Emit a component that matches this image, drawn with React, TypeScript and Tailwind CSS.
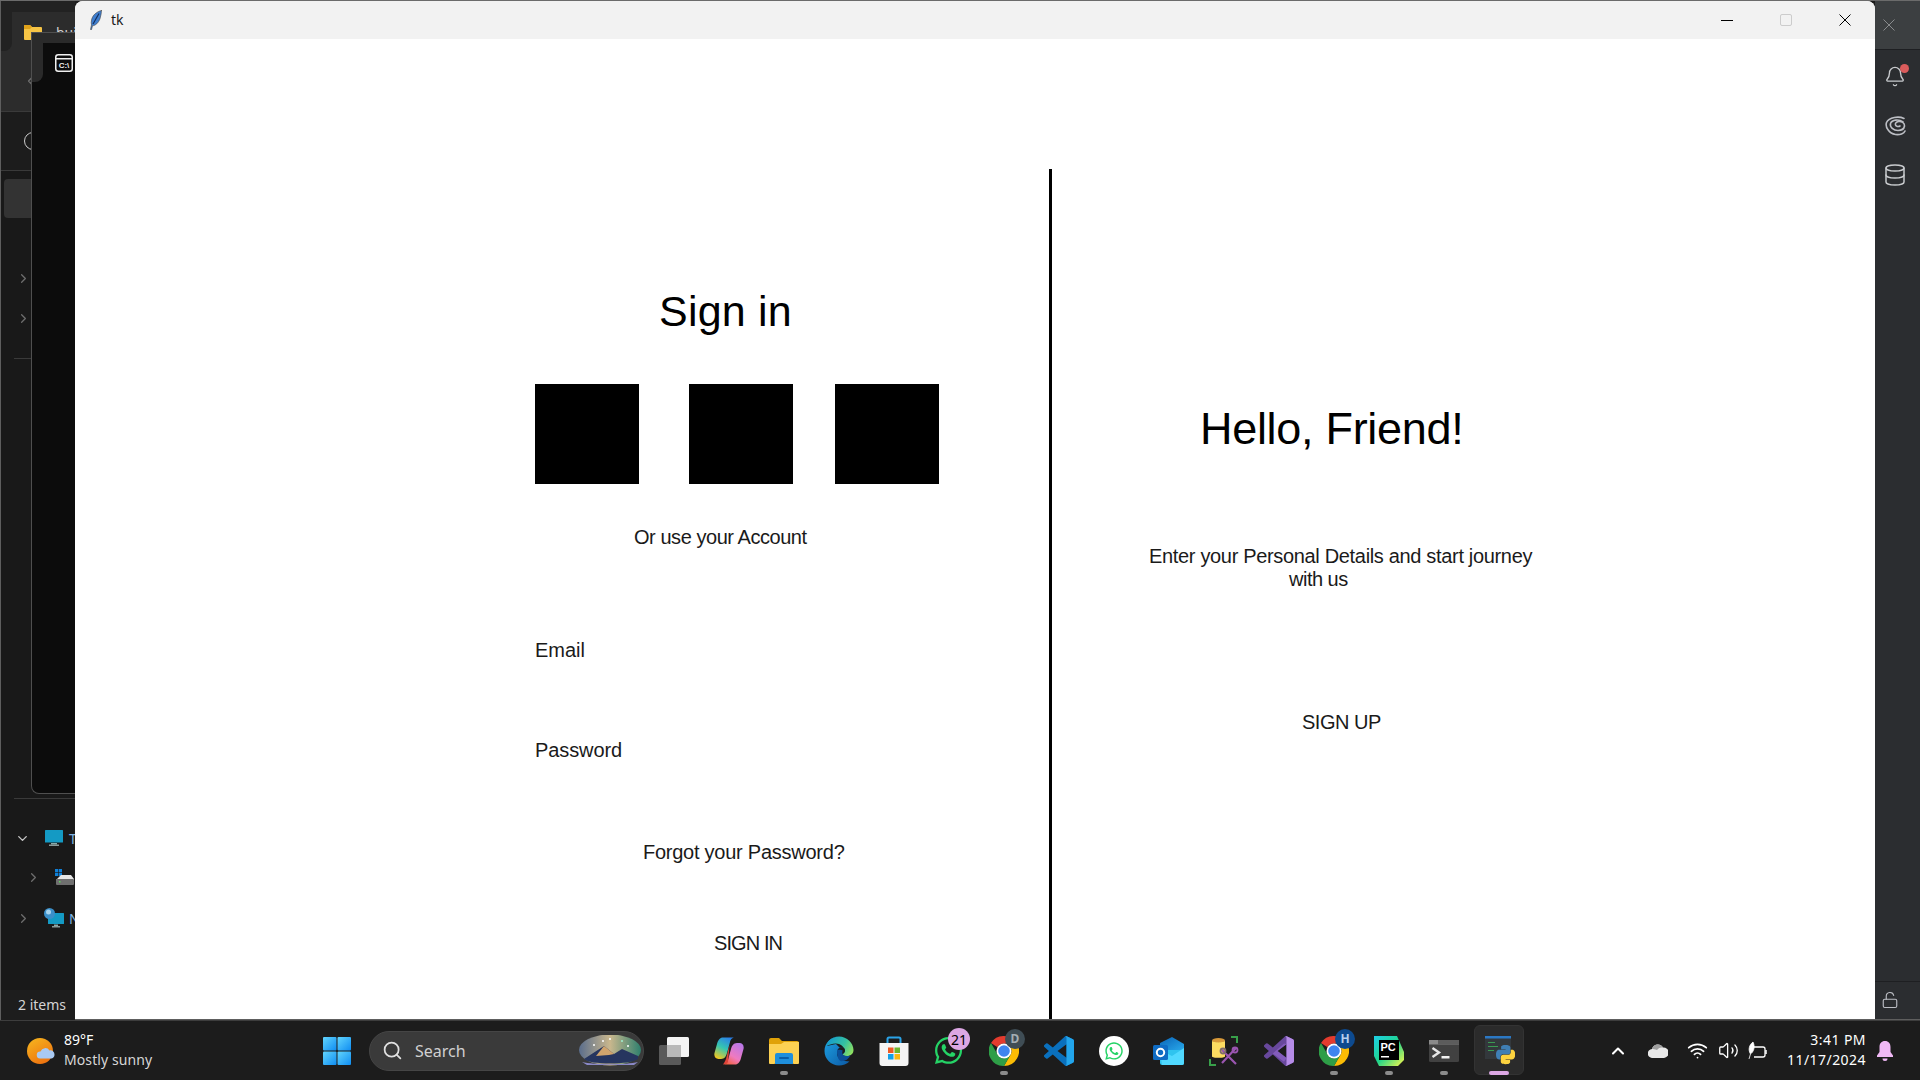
import React from "react";
import { Bell, ChevronDown, ChevronLeft, ChevronRight, ChevronUp, Database, LockOpen, Search, Volume2, Wifi } from "lucide-react";
import { FaWhatsapp } from "react-icons/fa";

const seg = "font-['Noto_Sans',sans-serif]";
const BG = "#1c1c1c";

function Feather() {
  return (
    <svg width="14" height="20" viewBox="0 0 14 20">
      <path d="M12.5 0.5C8 1.5 3.5 5 2.5 10c-.4 2-.3 3.5 0 5L1.5 19.5l1 .2 1-4c3 0 6-3 7.5-7 .9-3 1.5-6 1.5-8.700z" fill="#3f7fd0" stroke="#444" strokeWidth="0.6" />
      <path d="M10 3.500 4 14" stroke="#16305c" strokeWidth="1.200" />
    </svg>
  );
}

function Sun() {
  return (
    <svg width="28" height="26" viewBox="0 0 28 26">
      <defs>
        <linearGradient id="sunG" x1="0" y1="0" x2="0.6" y2="1">
          <stop offset="0" stopColor="#f6b81f" />
          <stop offset="1" stopColor="#ee7410" />
        </linearGradient>
      </defs>
      <circle cx="13" cy="13" r="13" fill="url(#sunG)" />
      <path d="M13 20.500a3.500 3.500 0 0 1 .5-7 5 5 0 0 1 9-1 4 4 0 0 1 5 4 4 4 0 0 1-3 4z" fill="#a9c9f2" />
    </svg>
  );
}

function WinLogo() {
  return (
    <svg width="28" height="28" viewBox="0 0 28 28">
      <defs>
        <linearGradient id="winG" x1="0" y1="0" x2="1" y2="1">
          <stop offset="0" stopColor="#62d5fd" />
          <stop offset="1" stopColor="#0f8df2" />
        </linearGradient>
      </defs>
      <rect x="0" y="0" width="13.500" height="13.500" rx="1" fill="url(#winG)" />
      <rect x="14.500" y="0" width="13.500" height="13.500" rx="1" fill="url(#winG)" />
      <rect x="0" y="14.500" width="13.500" height="13.500" rx="1" fill="url(#winG)" />
      <rect x="14.500" y="14.500" width="13.500" height="13.500" rx="1" fill="url(#winG)" />
    </svg>
  );
}

function SearchArt() {
  return (
    <svg width="63" height="31" viewBox="0 0 63 31" className="shrink-0">
      <defs>
        <linearGradient id="artSky" x1="0" y1="0" x2="1" y2="0">
          <stop offset="0" stopColor="#5a6d8c" />
          <stop offset="0.5" stopColor="#c9b78d" />
          <stop offset="1" stopColor="#2e7f6d" />
        </linearGradient>
      </defs>
      <ellipse cx="32" cy="15" rx="31" ry="15.500" fill="url(#artSky)" />
      <path d="M6 24l20-13 10 8 8-5 16 7v3c-8 6-48 6-54 0z" fill="#26355f" />
      <path d="M26 11l10 8-5 1-13 1z" fill="#d0a46d" />
      <path d="M4 27c12 3 44 3 56 0l-4 3H9z" fill="#8a88c7" />
      <circle cx="25" cy="6" r="1" fill="#fff" />
      <circle cx="32" cy="4" r="1" fill="#fff" />
      <circle cx="44" cy="6" r="1" fill="#9ff0d0" />
      <circle cx="16" cy="10" r="1" fill="#fff" />
      <circle cx="50" cy="11" r="1" fill="#fff" />
    </svg>
  );
}

function TaskView() {
  return (
    <svg width="30" height="28" viewBox="0 0 30 28">
      <rect x="8" y="0" width="22" height="20" rx="1.500" fill="#f4f4f4" />
      <rect x="0" y="8" width="22" height="20" rx="1.500" fill="#5e5e5e" fillOpacity="0.92" />
      <rect x="8" y="8" width="14" height="12" fill="#b9b9b9" />
    </svg>
  );
}

function Copilot() {
  return (
    <svg width="30" height="28" viewBox="0 0 30 28">
      <defs>
        <linearGradient id="cpA" x1="0.7" y1="0" x2="0.2" y2="1">
          <stop offset="0" stopColor="#2a7fe8" />
          <stop offset="0.5" stopColor="#35c6b0" />
          <stop offset="1" stopColor="#f4c81e" />
        </linearGradient>
        <linearGradient id="cpB" x1="0.8" y1="0" x2="0.2" y2="1">
          <stop offset="0" stopColor="#b877e8" />
          <stop offset="0.6" stopColor="#ef7ac0" />
          <stop offset="1" stopColor="#f5613a" />
        </linearGradient>
      </defs>
      <path d="M9 0.500H21C17.500 0.500 16.500 3 16 5L13 16C12.300 19 10.500 22 7 22H4.500C1.500 22 -.3 19.500 .5 16L3 7C4 3 6 0.500 9 0.500Z" fill="url(#cpA)" />
      <path d="M21 27.500H9C12.500 27.500 13.500 25 14 23L17 12C17.700 9 19.500 6 23 6H25.500C28.500 6 30.300 8.500 29.500 12L27 21C26 25 24 27.500 21 27.500Z" fill="url(#cpB)" />
      <path d="M15.500 8 12.500 20c-.4 2-1.500 5-3.500 7.500 2.500 0 4.500-.8 5-3z" fill="#e0443a" />
    </svg>
  );
}

function Files() {
  return (
    <svg width="30" height="26" viewBox="0 0 30 26">
      <path d="M0 2a2 2 0 0 1 2-2h8l3 3h15a2 2 0 0 1 2 2v3H0z" fill="#e0a208" />
      <path d="M0 6h12l3-2h15v21a1 1 0 0 1-1 1H1a1 1 0 0 1-1-1z" fill="#fcd153" />
      <path d="M5 25a1 1 0 0 0 0 1h20v-1z" fill="#e8b336" />
      <path d="M6 17a2 2 0 0 1 2-2h14a2 2 0 0 1 2 2v9H6z" fill="#1f8fdc" />
      <rect x="10" y="19" width="10" height="2" rx="1" fill="#0b5fa8" />
    </svg>
  );
}

function Edge() {
  return (
    <svg width="30" height="30" viewBox="0 0 30 30">
      <defs>
        <linearGradient id="edA" x1="0" y1="0" x2="1" y2="1">
          <stop offset="0" stopColor="#1ea3e4" />
          <stop offset="1" stopColor="#0c59a4" />
        </linearGradient>
        <linearGradient id="edB" x1="0" y1="0.3" x2="1" y2="0.7">
          <stop offset="0" stopColor="#149bd0" />
          <stop offset="0.6" stopColor="#35c1a0" />
          <stop offset="1" stopColor="#8fe060" />
        </linearGradient>
      </defs>
      <path d="M15 0.500C7 0.500 0.500 7 0.500 15S7 29.500 15 29.500c4 0 7.500-1.200 10.500-4L21 25c-4 0-8-3-8-8 0-2.500 2-4 3.500-4.500L12 8 3 10C5 5 9 .500 15 .500z" fill="url(#edA)" />
      <path d="M2 10C4 4 9 .500 15 .500c8 0 14.500 6.500 14.500 13.500 0 3.500-2.500 6-6.500 6-2.500 0-4.200-.8-4.500-1.800 1-.8 1.800-2 1.800-3.700 0-4-4-7-8.300-7-4 0-7.500 1.500-10 2.500z" fill="url(#edB)" />
      <path d="M13 16c0-2.500 1.500-4.500 5-4.500 2 0 3 1.500 3 3 0 1.500-1 3-2.500 3.500 .3 1 2 2 4.500 2 1.500 0 2.800-.3 3.500-.8-2 4-5.500 6.300-9.500 6-2.500-1-4-5-4-9.200z" fill="#0b4f99" />
      <path d="M13.500 14c1-2 2.500-2.800 4.500-2.800 2 0 3 1.500 3 3.300 0 1.500-.8 2.800-2.500 3.500-.4-1.200-.2-2.500 .3-3.500-1.500-1-3.500-1-5.300-.5z" fill={BG} />
    </svg>
  );
}

function Store() {
  return (
    <svg width="30" height="30" viewBox="0 0 30 30">
      <path d="M8.500 7V3a1.500 1.500 0 0 1 1.500-1.500h10A1.500 1.500 0 0 1 21.500 3v4" fill="none" stroke="#2aa3e8" strokeWidth="2" />
      <path d="M0.500 7h29v20a3 3 0 0 1-3 3h-23a3 3 0 0 1-3-3z" fill="#f4f4f4" />
      <rect x="9" y="11.500" width="5.500" height="5.500" fill="#ee5a24" />
      <rect x="15.500" y="11.500" width="5.500" height="5.500" fill="#6cb52d" />
      <rect x="9" y="18" width="5.500" height="5.500" fill="#12a0e8" />
      <rect x="15.500" y="18" width="5.500" height="5.500" fill="#f9b713" />
    </svg>
  );
}

function ChromeLogo() {
  return (
    <svg width="30" height="30" viewBox="0 0 30 30">
      <path d="M15 0a15 15 0 0 1 13 7.500H15a7.500 7.500 0 0 0-6.500 3.750L2 7A15 15 0 0 1 15 0z" fill="#e33b2e" />
      <path d="M28 7.500a15 15 0 0 1-13 22.500l6.500-11.250A7.500 7.500 0 0 0 21.500 11.250z" fill="#fbbc05" />
      <path d="M15 30A15 15 0 0 1 2 7l6.500 11.250A7.500 7.500 0 0 0 15 22.500l6.500-3.750z" fill="#2e9e47" />
      <circle cx="15" cy="15" r="7.500" fill="#fff" />
      <circle cx="15" cy="15" r="5.800" fill="#3f85f0" />
    </svg>
  );
}

const vsPath =
  "M23.15 2.587L18.21.21a1.494 1.494 0 0 0-1.705.29l-9.46 8.63-4.12-3.128a.999.999 0 0 0-1.276.057L.327 7.261A1 1 0 0 0 .326 8.740L3.899 12 .326 15.260a1 1 0 0 0 .001 1.479L1.650 17.940a.999.999 0 0 0 1.276.057l4.120-3.128 9.460 8.630a1.492 1.492 0 0 0 1.704.29l4.942-2.377A1.500 1.500 0 0 0 24 20.060V3.939a1.500 1.500 0 0 0-.85-1.352zm-5.146 14.861L10.826 12l7.178-5.448v10.896z";

function VSCode() {
  return (
    <svg width="30" height="30" viewBox="0 0 24 24">
      <path d={vsPath} fill="#0a70bd" />
      <path d="M17 .3c.4-.2.8-.2 1.200-.1l5 2.400c.5.3.8.800.8 1.400v16c0 .6-.3 1.100-.8 1.400l-5 2.400c-.4.100-.8.100-1.200-.1 .6 0 1-.5 1-1.200V1.500c0-.7-.4-1.200-1-1.200z" fill="#22a5ec" />
    </svg>
  );
}

function VisualStudio() {
  return (
    <svg width="30" height="30" viewBox="0 0 24 24">
      <path d={vsPath} fill="#68489c" />
      <path d="M17 .3c.4-.2.8-.2 1.200-.1l5 2.400c.5.3.8.800.8 1.400v16c0 .6-.3 1.100-.8 1.400l-5 2.400c-.4.100-.8.100-1.200-.1 .6 0 1-.5 1-1.200V1.500c0-.7-.4-1.200-1-1.200z" fill="#b68ce8" />
      <path d="M18 6.500 10.800 12 18 17.500l-2 3-9-6.500 9-8z" fill="#8e65c9" fillOpacity="0.7" />
    </svg>
  );
}

function Outlook() {
  return (
    <svg width="31" height="28" viewBox="0 0 31 28">
      <defs>
        <linearGradient id="olA" x1="0" y1="0" x2="1" y2="1">
          <stop offset="0" stopColor="#0a64b8" />
          <stop offset="1" stopColor="#28a8ea" />
        </linearGradient>
      </defs>
      <path d="M7 6l12-6 12 7v6H7z" fill="url(#olA)" />
      <path d="M7 13h24v13a2 2 0 0 1-2 2H9a2 2 0 0 1-2-2z" fill="#2fc4ef" />
      <path d="M7 13l12 6 12-8v15a2 2 0 0 1-2 2H9z" fill="#50d9ff" />
      <rect x="0" y="8" width="15" height="15" rx="1.500" fill="#0f6cc4" />
      <circle cx="7.500" cy="15.500" r="3.700" fill="none" stroke="#fff" strokeWidth="2" />
    </svg>
  );
}

function DbTool() {
  return (
    <svg width="30" height="30" viewBox="0 0 30 30">
      <ellipse cx="9.500" cy="4.500" rx="6.500" ry="2.500" fill="#d99a3a" />
      <path d="M3 4.500v16c0 1.800 13 1.800 13 0v-16c0 2.500-13 2.500-13 0z" fill="#fcdc61" />
      <path d="M22 1h6v6M1 23v6h6" fill="none" stroke="#38a04a" strokeWidth="2" />
      <path d="M27 12l-14 15M13 14l14 14" stroke="#9a55b0" strokeWidth="2.200" />
      <circle cx="26" cy="14" r="2.500" fill="none" stroke="#9a55b0" strokeWidth="1.800" />
      <circle cx="14" cy="15" r="2.500" fill="none" stroke="#7f6b6b" strokeWidth="1.800" />
    </svg>
  );
}

function PyCharm() {
  return (
    <div className="relative w-[30px] h-[30px]">
      <svg width="30" height="30" viewBox="0 0 30 30" className="absolute inset-0">
        <defs>
          <linearGradient id="pcA" x1="0" y1="0" x2="1" y2="1">
            <stop offset="0" stopColor="#1dd0e8" />
            <stop offset="0.5" stopColor="#20d48a" />
            <stop offset="1" stopColor="#fcf84a" />
          </linearGradient>
        </defs>
        <path d="M0 0h23l7 16v8l-6 6H5L0 20z" fill="url(#pcA)" />
        <rect x="5" y="4" width="20" height="20" fill="#000" />
        <rect x="7" y="20" width="8" height="1.500" fill="#fff" />
      </svg>
      <span className="absolute left-[7px] top-[4px] text-[11px] leading-[14px] font-bold text-white font-['Liberation_Sans',sans-serif]">PC</span>
    </div>
  );
}

function Terminal() {
  return (
    <svg width="30" height="22" viewBox="0 0 30 22">
      <rect x="0" y="0" width="30" height="22" rx="1.500" fill="#414141" />
      <rect x="0" y="0" width="30" height="4.500" fill="#8a8a8a" />
      <rect x="9" y="0" width="21" height="4.500" fill="#5c5c5c" />
      <path d="M3.500 8 10 12.500 3.500 17" fill="none" stroke="#e6e6e6" strokeWidth="2.400" />
      <rect x="12.500" y="16" width="8" height="2.500" fill="#f2f2f2" />
    </svg>
  );
}

function PythonApp() {
  return (
    <svg width="30" height="30" viewBox="0 0 30 30">
      <rect x="0" y="0" width="26" height="23" fill="#33383c" />
      <rect x="0" y="0" width="26" height="2.500" fill="#2b78c4" />
      <rect x="3" y="6" width="7" height="1" fill="#3a9a52" />
      <rect x="3" y="10" width="10" height="1" fill="#3a9a52" />
      <rect x="3" y="14" width="6" height="1" fill="#3a9a52" />
      <g transform="translate(11 9) scale(0.8)">
        <path d="M11.900 0C6 0 6.400 2.500 6.400 2.500V5.300H12V6H4C4 6 0 5.600 0 12C0 18.400 3.500 18 3.500 18H5.500V15.200C5.500 15.200 5.400 11.700 9 11.700H14.800C14.800 11.700 18 11.800 18 8.600V3.200C18 3.200 18.500 0 11.900 0Z" fill="#3f7fb5" />
        <path d="M11.900 0C6 0 6.400 2.500 6.400 2.500V5.300H12V6H4C4 6 0 5.600 0 12C0 18.400 3.500 18 3.500 18H5.500V15.200C5.500 15.200 5.400 11.700 9 11.700H14.800C14.800 11.700 18 11.800 18 8.600V3.200C18 3.200 18.500 0 11.900 0Z" fill="#fdd33f" transform="rotate(180 12 12)" />
      </g>
    </svg>
  );
}

function Badge({ cls, children }: { cls: string; children: React.ReactNode }) {
  return (
    <span className={`absolute rounded-full flex items-center justify-center ${seg} ${cls}`}>
      {children}
    </span>
  );
}

function Slot({ children, dot, badge }: { children: React.ReactNode; dot?: boolean; badge?: React.ReactNode }) {
  return (
    <div className="relative w-[55px] h-[59px] flex items-center justify-center shrink-0">
      {children}
      {badge}
      {dot && <span className="absolute left-[23.500px] bottom-[5px] w-[8px] h-[4px] rounded-full bg-[#8c8c8c]" />}
    </div>
  );
}

function Spiral() {
  return (
    <svg width="21" height="20" viewBox="0 0 21 20" fill="none" stroke="#bcbec4" strokeWidth="1.600" strokeLinecap="round">
      <path d="M19 2.500C14 0 4 1 1.500 6.500c-1.500 4.500 2.500 11 9 12 4.500.6 8.500-1 9.500-3.500" />
      <path d="M18 6C14 3 7 3.500 5.500 7.500c-1 3.500 3 7 7.500 7 3 0 6-1.500 6.500-4.500 .3-3-3-5-6-4.500-2.500.5-3.500 2-3 3.500 .5 1.500 3 2 4.500 1" />
    </svg>
  );
}

function Explorer() {
  return (
    <div className="relative w-[75px] h-full flex flex-col overflow-hidden border-l border-[#5e5e5e] bg-[#191919]">
      <div className="relative h-[110px] bg-[#2c2c2c] shrink-0 flex flex-col">
        <div className="h-[11px] bg-[#222222] shrink-0" />
        <div className="flex items-start">
          <div className="w-[11px] h-[39px] bg-[#222222] rounded-br-lg shrink-0" />
          <div className="ml-[12px] mt-[13px] flex items-center gap-[14px]">
            <svg width="18" height="15" viewBox="0 0 18 15">
              <path d="M0 1a1 1 0 0 1 1-1h5l2 2h9a1 1 0 0 1 1 1v11a1 1 0 0 1-1 1H1a1 1 0 0 1-1-1z" fill="#f6c445" />
              <path d="M0 1a1 1 0 0 1 1-1h5l2 2-2 2H0z" fill="#e0a21a" />
            </svg>
            <span className={`text-[14px] leading-[14px] text-[#cfcfcf] ${seg}`}>build</span>
          </div>
        </div>
        <ChevronLeft size={12} strokeWidth={2.500} className="absolute left-[23px] top-[74px] text-[#6e6e6e]" />
      </div>
      <div className="h-[59px] border-t border-[#3a3a3a] shrink-0 flex items-center bg-[#1c1c1c]">
        <div className="ml-[23px] w-[18px] h-[18px] rounded-full border border-[#cccccc]" />
      </div>
      <div className="flex-1 border-t border-[#3a3a3a] flex flex-col min-h-0 bg-[#191919]">
        <div className="ml-[3px] mt-[8px] w-[70px] h-[39px] bg-[#333333] rounded-[4px] shrink-0" />
        <ChevronRight size={15} strokeWidth={2} className="ml-[15px] mt-[53px] text-[#6e6e6e] shrink-0" />
        <ChevronRight size={15} strokeWidth={2} className="ml-[15px] mt-[25px] text-[#6e6e6e] shrink-0" />
        <div className="ml-[13px] mt-[32px] h-px bg-[#3a3a3a] shrink-0" />
        <div className="ml-[13px] mt-[439px] h-px bg-[#3a3a3a] shrink-0" />
        <div className="flex items-center mt-[31px] h-[16px] shrink-0">
          <ChevronDown size={15} strokeWidth={2.200} className="ml-[14px] text-[#c8c8c8] shrink-0" />
          <svg width="18" height="16" viewBox="0 0 18 16" className="ml-[15px] shrink-0">
            <rect x="0" y="0" width="18" height="12.500" rx="0.500" fill="#149ac4" />
            <rect x="6" y="13" width="6" height="1.500" fill="#8aa" />
            <rect x="4" y="14.500" width="10" height="1.500" fill="#899" />
          </svg>
          <span className={`ml-[6px] text-[14px] text-[#7fb2e0] whitespace-nowrap ${seg}`}>This PC</span>
        </div>
        <div className="flex items-center mt-[23px] h-[16px] shrink-0">
          <ChevronRight size={15} strokeWidth={2} className="ml-[25px] text-[#6e6e6e] shrink-0" />
          <svg width="19" height="16" viewBox="0 0 19 16" className="ml-[14px] shrink-0">
            <rect x="0" y="0" width="3.200" height="3.200" fill="#0f7fd6" />
            <rect x="3.800" y="0" width="3.200" height="3.200" fill="#0f7fd6" />
            <rect x="0" y="3.800" width="3.200" height="3.200" fill="#0f7fd6" />
            <rect x="3.800" y="3.800" width="3.200" height="3.200" fill="#0f7fd6" />
            <path d="M3 9l3-3h10l3 4v1H1z" fill="#e6e6e6" />
            <rect x="1" y="10" width="18" height="6" rx="1" fill="#6f6f6f" />
            <rect x="4" y="12" width="1.500" height="1.500" fill="#5fd35f" />
          </svg>
        </div>
        <div className="flex items-center mt-[23px] h-[20px] shrink-0">
          <ChevronRight size={15} strokeWidth={2} className="ml-[15px] text-[#6e6e6e] shrink-0" />
          <svg width="21" height="20" viewBox="0 0 21 20" className="ml-[13px] shrink-0">
            <rect x="4" y="5" width="16" height="11" rx="0.500" fill="#149ac4" />
            <rect x="10" y="16.500" width="4" height="1.500" fill="#8aa" />
            <rect x="8" y="18" width="8" height="1.500" fill="#899" />
            <circle cx="5.500" cy="5.500" r="5.500" fill="#3b8fc9" />
            <circle cx="4.500" cy="4" r="2.500" fill="#a6d3ee" />
          </svg>
          <span className={`ml-[4px] text-[14px] text-[#7fb2e0] whitespace-nowrap ${seg}`}>Network</span>
        </div>
        <div className="flex-1" />
        <div className={`h-[30px] shrink-0 flex items-center pl-[17px] pb-[2px] text-[14px] text-[#d4d4d4] bg-[#1d1d1d] ${seg}`}>2 items</div>
      </div>
      <div className="absolute left-[30px] top-[31px] w-[45px] h-[762px] bg-[#0c0c0c] border-l border-t border-b border-[#4f4f4f] rounded-bl-lg overflow-hidden">
        <div className="h-[10px] bg-[#2a2a2a]" />
        <div className="w-[11px] h-[39px] bg-[#2a2a2a] rounded-br-lg" />
        <svg width="18" height="18" viewBox="0 0 18 18" className="absolute left-[23px] top-[21px]">
          <rect x="0.750" y="0.750" width="16.500" height="16.500" rx="2.500" fill="none" stroke="#f0f0f0" strokeWidth="1.500" />
          <rect x="0.750" y="4" width="16.500" height="1.500" fill="#f0f0f0" />
          <text x="9" y="14" fontSize="8" fontWeight="700" fill="#f0f0f0" textAnchor="middle" fontFamily="'Liberation Sans',sans-serif">C:\</text>
        </svg>
      </div>
    </div>
  );
}

function TkWindow() {
  const body = "text-[20px] leading-[20px] text-[#1a1a1a] whitespace-nowrap";
  return (
    <div className="w-[1800px] h-full bg-white rounded-t-lg overflow-hidden flex flex-col font-['Liberation_Sans',sans-serif]">
      <div className="h-[38px] bg-[#f2f2f2] flex items-center shrink-0">
        <div className="ml-[14px] w-[14px] flex"><Feather /></div>
        <span className={`ml-[8px] pb-[2px] text-[14px] text-[#1a1a1a] ${seg}`}>tk</span>
        <div className="ml-auto pr-[1px] flex items-center h-full">
          <div className="w-[58px] flex justify-center"><div className="w-[12px] h-px bg-black" /></div>
          <div className="w-[59px] flex justify-center"><div className="w-[12px] h-[12px] border-[1.500px] border-[#cccccc] rounded-[2px]" /></div>
          <div className="w-[59px] flex justify-center">
            <svg width="12" height="12" viewBox="0 0 12 12"><path d="M0.500 0.500l11 11M11.500 0.500l-11 11" stroke="#000" strokeWidth="1" /></svg>
          </div>
        </div>
      </div>
      <div className="flex-1 flex min-h-0">
        <div className="w-[974px] shrink-0 pt-[251px] pl-[460px] flex flex-col items-start">
          <h1 className="ml-[124px] text-[43px] leading-[43px] tracking-[0.200px] text-black whitespace-nowrap">Sign in</h1>
          <div className="mt-[51px] flex items-start">
            <div className="w-[104px] h-[100px] bg-black" />
            <div className="ml-[50px] w-[104px] h-[100px] bg-black" />
            <div className="ml-[42px] w-[104px] h-[100px] bg-black" />
          </div>
          <p className={`ml-[99px] mt-[43px] tracking-[-0.450px] ${body}`}>Or use your Account</p>
          <p className={`mt-[93px] ${body}`}>Email</p>
          <p className={`mt-[80px] tracking-[-0.100px] ${body}`}>Password</p>
          <p className={`ml-[108px] mt-[82px] tracking-[-0.250px] ${body}`}>Forgot your Password?</p>
          <p className={`ml-[179px] mt-[71px] tracking-[-0.900px] ${body}`}>SIGN IN</p>
        </div>
        <div className="w-[3px] mt-[130px] bg-black shrink-0" />
        <div className="flex-1 pt-[367px] flex flex-col items-start">
          <h2 className="ml-[148px] text-[45px] leading-[45px] tracking-[-0.300px] text-black whitespace-nowrap">Hello, Friend!</h2>
          <p className={`ml-[97px] mt-[95px] tracking-[-0.330px] ${body}`}>Enter your Personal Details and start journey</p>
          <p className={`ml-[237px] mt-[3px] tracking-[-0.500px] ${body}`}>with us</p>
          <p className={`ml-[250px] mt-[123px] tracking-[-0.500px] ${body}`}>SIGN UP</p>
        </div>
      </div>
    </div>
  );
}

function RightStrip() {
  return (
    <div className="w-[45px] h-full flex flex-col bg-[#2b2d30] border-b border-[#5e5e5e]">
      <div className="h-[49px] shrink-0 bg-[#3c3f41] border-b border-[#1e1f22] flex items-center pl-[8px]">
        <svg width="12" height="12" viewBox="0 0 12 12"><path d="M0.500 0.500l11 11M11.500 0.500l-11 11" stroke="#8a8c8e" strokeWidth="1" /></svg>
      </div>
      <div className="flex-1 flex flex-col items-center pr-[5px]">
        <div className="relative mt-[14px] w-[22px] h-[24px] flex items-center justify-center">
          <Bell size={23} strokeWidth={1.500} className="text-[#c8cacd]" />
          <span className="absolute right-[-3px] top-[0px] w-[9px] h-[9px] rounded-full bg-[#db5c5c]" />
        </div>
        <div className="mt-[28px] flex"><Spiral /></div>
        <Database size={24} strokeWidth={1.500} className="mt-[27px] text-[#c8cacd]" />
        <div className="flex-1" />
        <div className="w-[45px] ml-[5px] h-[38px] border-t border-[#1e1f22] flex items-start pl-[6px] pt-[9px]">
          <LockOpen size={18} strokeWidth={1.500} className="text-[#bcbec4]" />
        </div>
      </div>
    </div>
  );
}

function Taskbar() {
  return (
    <div className="h-[60px] shrink-0 bg-[#1c1c1c] border-t border-[#3d3d3d] flex items-center">
      <div className="w-[323px] pl-[27px] flex items-center shrink-0">
        <Sun />
        <div className={`ml-[9px] pb-[2px] flex flex-col ${seg}`}>
          <span className="text-[14px] leading-[20px] text-white">89°F</span>
          <span className="text-[14px] leading-[20px] tracking-[0.100px] text-[#d6d6d6]">Mostly sunny</span>
        </div>
      </div>
      <WinLogo />
      <div className="ml-[18px] w-[275px] h-[40px] rounded-full bg-[#3a3a3a] border border-[#454545] flex items-center pl-[12px] pr-[2px] shrink-0">
        <Search size={21} strokeWidth={2} className="text-[#e0e0e0] shrink-0" />
        <span className={`ml-[12px] text-[16px] text-[#d0d0d0] ${seg}`}>Search</span>
        <div className="ml-auto flex"><SearchArt /></div>
      </div>
      <div className="ml-[2px] flex items-center">
        <Slot><TaskView /></Slot>
        <Slot><Copilot /></Slot>
        <Slot dot><Files /></Slot>
        <Slot><Edge /></Slot>
        <Slot><Store /></Slot>
        <Slot badge={<Badge cls="left-[27px] top-[7px] w-[22px] h-[22px] text-[14px] bg-[#dca7e4] text-black">21</Badge>}>
          <FaWhatsapp size={31} className="text-[#25d366]" />
        </Slot>
        <Slot dot badge={<Badge cls="left-[29px] top-[8px] w-[20px] h-[20px] text-[12px] font-bold bg-[#3f4d55] text-[#a4aeb4]">D</Badge>}>
          <ChromeLogo />
        </Slot>
        <Slot><VSCode /></Slot>
        <Slot>
          <div className="w-[30px] h-[30px] rounded-full bg-white flex items-center justify-center">
            <FaWhatsapp size={20} className="text-[#25d366]" />
          </div>
        </Slot>
        <Slot><Outlook /></Slot>
        <Slot><DbTool /></Slot>
        <Slot><VisualStudio /></Slot>
        <Slot dot badge={<Badge cls="left-[29px] top-[8px] w-[20px] h-[20px] text-[12px] font-bold bg-[#0d4a8f] text-[#b4cfee]">H</Badge>}>
          <ChromeLogo />
        </Slot>
        <Slot dot><PyCharm /></Slot>
        <Slot dot><Terminal /></Slot>
        <div className="relative w-[55px] h-[59px] flex items-center justify-center shrink-0">
          <div className="absolute left-[3px] top-[4px] w-[50px] h-[50px] rounded-md bg-[#2b2b2b] border border-[#333333]" />
          <div className="relative left-[1px] flex"><PythonApp /></div>
          <span className="absolute left-[18px] bottom-[5px] w-[20px] h-[4px] rounded-full bg-[#dca7e4]" />
        </div>
      </div>
      <ChevronUp size={20} strokeWidth={2.500} className="ml-[82px] text-white shrink-0" />
      <svg width="20" height="14" viewBox="0 0 20 14" className="ml-[20px] shrink-0">
        <path d="M4.500 14a4.500 4.500 0 0 1-.5-9 6 6 0 0 1 11-1.500 4.500 4.500 0 0 1 1 10.500z" fill="#e8e8e8" />
        <path d="M4 5a6 6 0 0 1 11-1.500C12 3 10 4.500 9 6 7 5 5 5 4 5z" fill="#9e9e9e" />
      </svg>
      <Wifi size={21} strokeWidth={2} className="ml-[19px] text-white shrink-0" />
      <Volume2 size={21} strokeWidth={1.500} className="ml-[10px] text-white shrink-0" />
      <svg width="21" height="20" viewBox="0 0 21 20" fill="none" className="ml-[8px] shrink-0">
        <path d="M7 6h9a2 2 0 0 1 2 2v6a2 2 0 0 1-2 2H7" stroke="#fff" strokeWidth="1.300" />
        <path d="M19 9v4" stroke="#fff" strokeWidth="1.500" />
        <path d="M6 1C2 4 1 9 3.500 13c3-2 5-7 2.500-12zM3.500 13 2 18" fill="#fff" stroke="#fff" strokeWidth="0.800" />
      </svg>
      <div className={`w-[98px] pb-[2px] flex flex-col items-end text-white text-[14px] leading-[20px] tracking-[0.450px] shrink-0 ${seg}`}>
        <span>3:41 PM</span>
        <span>11/17/2024</span>
      </div>
      <svg width="20" height="22" viewBox="0 0 20 22" className="ml-[9px] shrink-0">
        <path d="M10 1c-3.500 0-5.500 2.500-5.500 6v5L2 15.500v1.500h16v-1.500L15.500 12V7c0-3.500-2-6-5.500-6z" fill="#f0b8f5" />
        <path d="M7.500 18.500h5a2.500 2.500 0 0 1-5 0z" fill="#f0b8f5" />
      </svg>
    </div>
  );
}

export default function App() {
  return (
    <div className="w-[1920px] h-[1080px] overflow-hidden flex flex-col bg-[#1c1c1c]">
      <div className="flex-1 min-h-0 flex border-t border-[#6b6b6b]">
        <Explorer />
        <div className="h-full border-b border-[#5e5e5e] flex"><TkWindow /></div>
        <RightStrip />
      </div>
      <Taskbar />
    </div>
  );
}
